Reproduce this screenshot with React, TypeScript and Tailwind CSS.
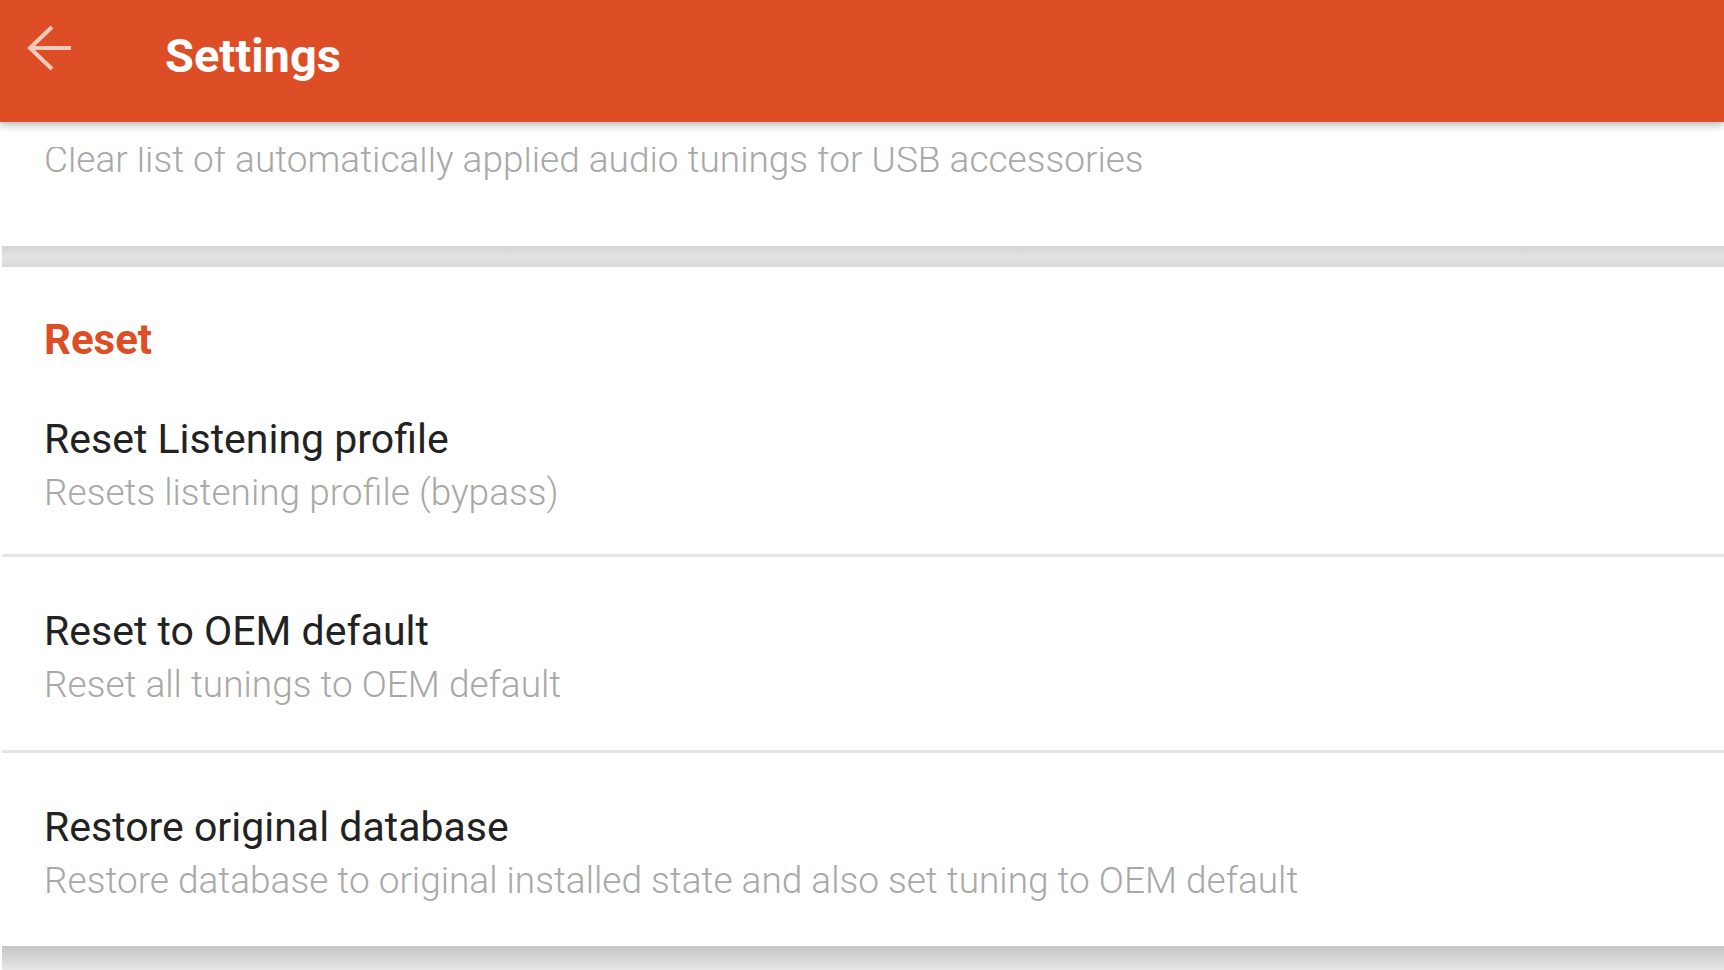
// Settings screen: Android-style preference list, "Reset" category.
import React from "react";

type Pref = { title: string; summary: string };

const RESET_PREFS: Pref[] = [
  { title: "Reset Listening profile", summary: "Resets listening profile (bypass)" },
  { title: "Reset to OEM default", summary: "Reset all tunings to OEM default" },
  {
    title: "Restore original database",
    summary: "Restore database to original installed state and also set tuning to OEM default",
  },
];

function BackArrow() {
  return (
    <svg width="46" height="46" viewBox="0 0 46 46" fill="none" aria-hidden="true" className="mt-[25px] ml-[27px] shrink-0 opacity-70">
      <path d="M2 23H44M25 2L3 23L25 44" stroke="#ffffff" strokeWidth="4" />
    </svg>
  );
}

function PrefRow({ title, summary, first }: Pref & { first?: boolean }) {
  return (
    <div className={first ? "pl-[42px] pt-[50px] pb-[35px]" : "pl-[42px] pt-[46px] pb-[39px]"}>
      <div className="h-[56px] text-[41px] leading-[56px] text-[#222222]">{title}</div>
      <div className="h-[52px] text-[37px] font-light leading-[52px] text-[#a8a8a8]">{summary}</div>
    </div>
  );
}

export default function App() {
  return (
    <div className="flex h-[970px] w-[1724px] flex-col overflow-hidden bg-white font-['Roboto','Noto_Sans',sans-serif]">
      <header className="relative z-10 flex h-[122px] shrink-0 items-start bg-[#dd4e26] shadow-[0_3px_8px_rgba(0,0,0,0.28)]">
        <BackArrow />
        <h1 className="mt-[26px] ml-[92px] text-[47px] font-bold leading-[60px] text-white">Settings</h1>
      </header>

      <div className="flex flex-1 flex-col pl-[2px]">
        {/* previous item, scrolled half out of view */}
        <div className="pt-[25px]">
          <div className="h-[99px] overflow-hidden pl-[42px]">
            <p className="-mt-[12px] text-[37px] font-light leading-[50px] text-[#a8a8a8]">
              Clear list of automatically applied audio tunings for USB accessories
            </p>
          </div>
        </div>

        <div className="h-[21px] shrink-0 bg-gradient-to-b from-[#d3d3d3] via-[#e3e3e3] to-[#dadada]" />

        <div className="pl-[42px] pt-[48px]">
          <div className="h-[50px] text-[42px] font-bold leading-[50px] text-[#dd4e26]">Reset</div>
        </div>

        <div className="-mt-[4px]">
          {RESET_PREFS.map((p, i) => (
            <div key={p.title}>
              {i > 0 && <div className="h-[3px] bg-[#e5e5e5]" />}
              <PrefRow {...p} first={i === 0} />
            </div>
          ))}
        </div>

        <div className="flex-1 bg-gradient-to-b from-[#c6c6c6] to-[#e6e6e6]" />
      </div>
    </div>
  );
}
